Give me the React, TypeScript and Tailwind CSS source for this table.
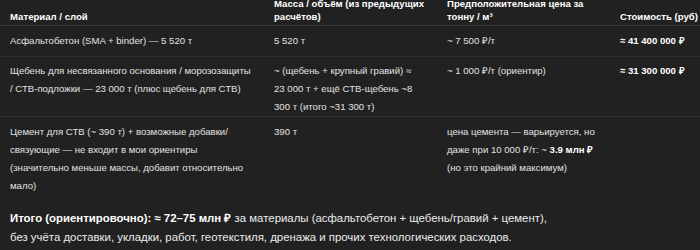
import React from 'react';

type Row = {
  material: React.ReactNode;
  mass: React.ReactNode;
  price: React.ReactNode;
  cost: React.ReactNode;
  pad: string;
};

const Bold = ({ children }: { children: React.ReactNode }) => (
  <strong className="font-bold text-white">{children}</strong>
);

const rows: Row[] = [
  {
    material: 'Асфальтобетон (SMA + binder) — 5 520 т',
    mass: '5 520 т',
    price: '~ 7 500 ₽/т',
    cost: <Bold>≈ 41 400 000 ₽</Bold>,
    pad: 'pt-[6px] pb-[6px]',
  },
  {
    material: (
      <>
        Щебень для несвязанного основания / морозозащиты
        <br />/ СТВ-подложки — 23 000 т (плюс щебень для СТВ)
      </>
    ),
    mass: (
      <>
        ~ (щебень + крупный гравий) ≈<br />
        23 000 т + ещё СТВ-щебень ~8
        <br />
        300 т (итого ~31 300 т)
      </>
    ),
    price: '~ 1 000 ₽/т (ориентир)',
    cost: <Bold>≈ 31 300 000 ₽</Bold>,
    pad: 'pt-[5px] pb-0',
  },
  {
    material: (
      <>
        Цемент для СТВ (~ 390 т) + возможные добавки/
        <br />
        связующие — не входит в мои ориентиры
        <br />
        (значительно меньше массы, добавит относительно
        <br />
        мало)
      </>
    ),
    mass: '390 т',
    price: (
      <>
        цена цемента — варьируется, но
        <br />
        даже при 10 000 ₽/т: ~ <Bold>3.9 млн ₽</Bold>
        <br />
        (но это крайний максимум)
      </>
    ),
    cost: '',
    pad: 'pt-[6px] pb-0',
  },
];

const cols = 'grid grid-cols-[264px_173px_173px_90px]';

export default function App() {
  return (
    <div className="w-[700px] h-[250px] overflow-hidden bg-[#212121] text-[#e2e2e2] font-['Liberation_Sans',Arial,sans-serif]">
      <div className="-mt-[3px]">
        <div className={`${cols} items-end border-b border-[#3a3a3a] pb-[2px] text-[9.6px] leading-[13px] font-bold text-white whitespace-nowrap`}>
          <div className="pl-[10px]">Материал / слой</div>
          <div className="pl-[10px]">
            Масса / объём (из предыдущих
            <br />
            расчётов)
          </div>
          <div className="pl-[10px]">
            Предположительная цена за
            <br />
            тонну / м³
          </div>
          <div className="pl-[10px]">Стоимость (руб)</div>
        </div>
        {rows.map((r, i) => (
          <div
            key={i}
            className={`${cols} text-[9.6px] leading-[18px] whitespace-nowrap ${i < rows.length - 1 ? 'border-b border-[#2e2e2e]' : ''}`}
          >
            <div className={`pl-[10px] ${r.pad}`}>{r.material}</div>
            <div className={`pl-[10px] ${r.pad}`}>{r.mass}</div>
            <div className={`pl-[10px] ${r.pad}`}>{r.price}</div>
            <div className={`pl-[10px] ${r.pad}`}>{r.cost}</div>
          </div>
        ))}
      </div>
      <div className="px-[10px] mt-[14px] text-[11.4px] leading-[19px] text-[#ececec]">
        <p>
          <Bold>Итого (ориентировочно): ≈ 72–75 млн ₽</Bold> за материалы (асфальтобетон + щебень/гравий + цемент),
        </p>
        <p>без учёта доставки, укладки, работ, геотекстиля, дренажа и прочих технологических расходов.</p>
      </div>
    </div>
  );
}
